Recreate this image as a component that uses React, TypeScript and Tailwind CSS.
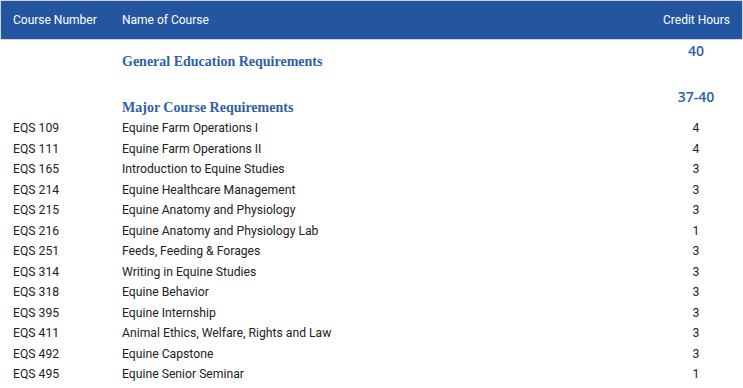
const courses: [string, string, string][] = [
  ['EQS 109', 'Equine Farm Operations I', '4'],
  ['EQS 111', 'Equine Farm Operations II', '4'],
  ['EQS 165', 'Introduction to Equine Studies', '3'],
  ['EQS 214', 'Equine Healthcare Management', '3'],
  ['EQS 215', 'Equine Anatomy and Physiology', '3'],
  ['EQS 216', 'Equine Anatomy and Physiology Lab', '1'],
  ['EQS 251', 'Feeds, Feeding & Forages', '3'],
  ['EQS 314', 'Writing in Equine Studies', '3'],
  ['EQS 318', 'Equine Behavior', '3'],
  ['EQS 395', 'Equine Internship', '3'],
  ['EQS 411', 'Animal Ethics, Welfare, Rights and Law', '3'],
  ['EQS 492', 'Equine Capstone', '3'],
  ['EQS 495', 'Equine Senior Seminar', '1'],
];

function SectionRow({ title, hours, className }: { title: string; hours: string; className?: string }) {
  return (
    <div className={`flex px-[13px] pt-[1px] ${className ?? ''}`}>
      <div className="w-[109px] shrink-0" />
      <div className="flex-1 pt-[11px] font-['Liberation_Serif',serif] text-[14px] leading-[20px] font-bold text-[#2f5ea8]">
        {title}
      </div>
      <div className="w-[68px] shrink-0 text-center font-['Open_Sans',sans-serif] text-[14px] leading-[19px] font-semibold text-[#2f5ea8]">
        {hours}
      </div>
    </div>
  );
}

export default function App() {
  return (
    <div className="h-[388px] w-[743px] overflow-hidden bg-white font-['Roboto',sans-serif] text-[12.2px] text-[#222]">
      <div className="flex h-[40px] items-center border border-[#cfd6e2] bg-[#2455a0] px-[12px] text-[12px] text-white">
        <div className="w-[109px] shrink-0">Course Number</div>
        <div className="flex-1">Name of Course</div>
        <div className="shrink-0">Credit Hours</div>
      </div>

      <SectionRow title="General Education Requirements" hours="40" className="h-[46px]" />
      <SectionRow title="Major Course Requirements" hours="37-40" className="h-[32px]" />

      <div className="flex flex-col">
        {courses.map(([num, name, hrs]) => (
          <div key={num} className="flex h-[20.5px] items-center px-[13px]">
            <div className="w-[109px] shrink-0">{num}</div>
            <div className="flex-1">{name}</div>
            <div className="w-[68px] shrink-0 text-center">{hrs}</div>
          </div>
        ))}
      </div>
    </div>
  );
}
